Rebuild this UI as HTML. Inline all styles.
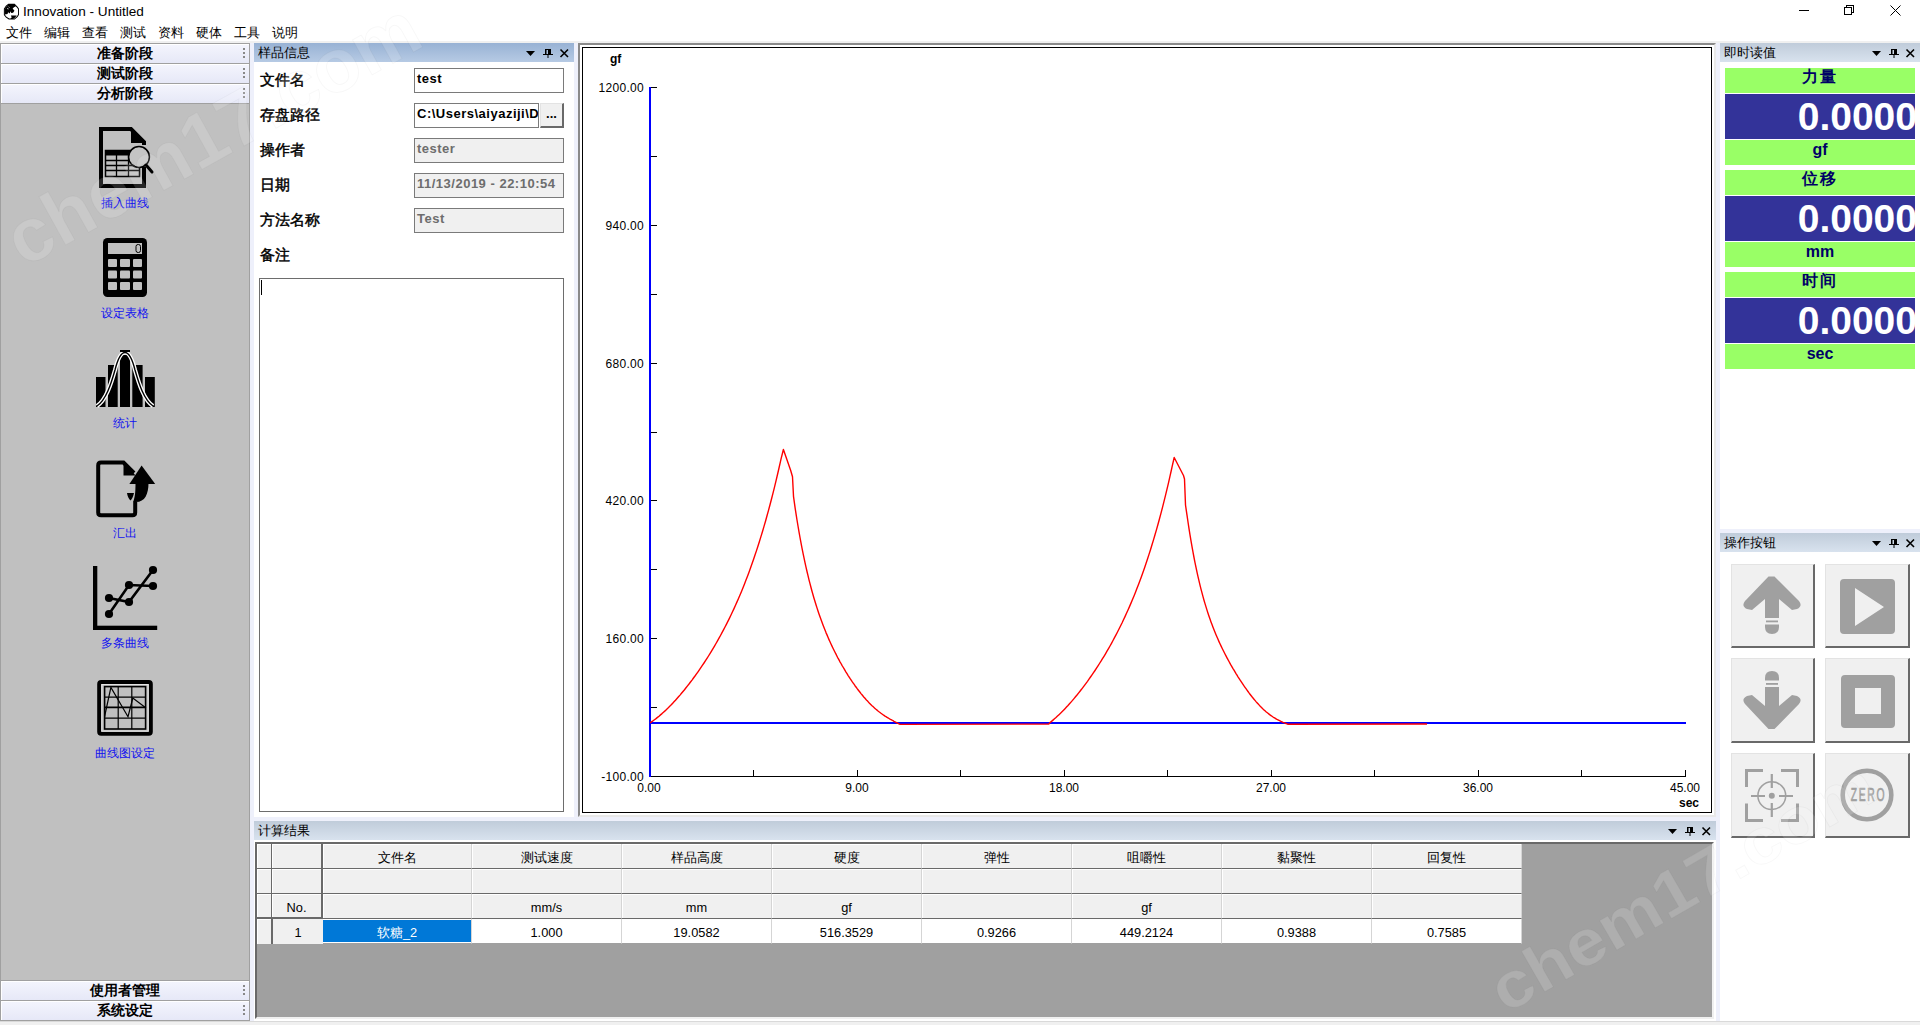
<!DOCTYPE html>
<html><head><meta charset="utf-8">
<style>
*{margin:0;padding:0;box-sizing:border-box}
html,body{width:1920px;height:1025px;overflow:hidden;background:#F0F0F0;font-family:"Liberation Sans",sans-serif;color:#000}
.a{position:absolute}
.t{white-space:nowrap;line-height:1}
.hdr{position:absolute;left:0;width:250px;height:21px;border:1px solid #A0A0A0;background:linear-gradient(#F4F5FD,#E6E8F7);box-shadow:inset 1px 1px 0 #fff}
.hdr span{position:absolute;left:0;width:248px;text-align:center;top:2px;font-size:14px;font-weight:bold;line-height:15px}
.grip{position:absolute;left:242px;top:4px;width:2px;height:10px;background:linear-gradient(#888 0 2px,transparent 2px 4px,#888 4px 6px,transparent 6px 8px,#888 8px 10px)}
.ico{position:absolute;left:0;width:250px;text-align:center;font-size:12px;color:#1010F0;line-height:12px}
.cap{position:absolute;height:19px;font-size:13px;line-height:19px;padding-left:4px;color:#000}
.capA{background:linear-gradient(#98B2D4,#B6CAE4)}
.capI{background:linear-gradient(#C0CCDA,#D8E2EE)}
.lbl{position:absolute;left:260px;font-size:15px;font-weight:normal;-webkit-text-stroke:0.45px #000;letter-spacing:0px;line-height:15px;font-family:"Liberation Serif",serif}
.fld{position:absolute;left:414px;width:150px;height:25px;border:1px solid #7A7A7A;background:#fff;font-size:13px;font-weight:bold;line-height:19px;padding-left:2px;letter-spacing:0.5px;overflow:hidden;white-space:nowrap}
.dis{background:#F0F0F0;color:#6D6D6D}
.ylab{position:absolute;width:50px;text-align:right;font-size:12px;line-height:12px;letter-spacing:0.3px}
.xlab{position:absolute;width:60px;text-align:center;font-size:12px;line-height:12px}
.gbar{position:absolute;left:1725px;width:190px;height:25px;background:#99FF66;color:#000066;text-align:center}
.bbar{position:absolute;left:1725px;width:190px;height:45px;background:#333399;color:#fff;text-align:right;font-weight:bold;font-size:39px;line-height:46px;overflow:hidden;padding-right:0}
.bbar b{position:relative;left:2px}
.btn{position:absolute;background:#F0F0F0;border-top:1px solid #E3E3E3;border-left:1px solid #E3E3E3;border-right:2px solid #696969;border-bottom:2px solid #696969}
.gc{position:absolute;background:#F0F0F0;border-right:1px solid #A0A0A0;border-bottom:1px solid #A0A0A0;font-size:12.8px;text-align:center;line-height:24px;padding-top:2px}
</style></head><body>
<!-- title bar -->
<div class="a" style="left:0;top:0;width:1920px;height:41px;background:#fff"></div>
<div class="a" style="left:0;top:41px;width:1920px;height:2px;background:#F0F0F0"></div>
<svg class="a" style="left:2.5px;top:3px" width="16.5" height="16.5" viewBox="0 0 18 18"><path d="M6 1.5 H12.5 L15.5 4.5 L17 6.5 V12.5 L15.5 15 L12.5 17.5 H6.5 L3.5 15.5 L1.5 13 V6.5 L3.5 3.5Z" fill="#fff" stroke="#000" stroke-width="1.1"/><path d="M6 1.5 H12.5 L14 3.5 L12 4.5 L10.5 6 L12.5 8.5 L11 10.5 L9 11 L8 9 L7.5 11.5 L5.5 10 L5 12 L2 12.5 V6.5 L4 3.5Z" fill="#000"/><path d="M8.5 13.5 H15 L13 16 L11 17.5 H8 L9.5 15.5Z" fill="#000"/><path d="M4.5 6 L6 6.5 M6 4 L7 5" stroke="#fff" stroke-width="0.9"/></svg>
<div class="a t" style="left:23px;top:5px;font-size:13.6px;color:#000">Innovation - Untitled</div>
<div class="a" style="left:1799px;top:10px;width:10px;height:1px;background:#000"></div>
<div class="a" style="left:1846px;top:5px;width:8px;height:8px;border:1px solid #000"></div>
<div class="a" style="left:1844px;top:7px;width:8px;height:8px;border:1px solid #000;background:#fff"></div>
<svg class="a" style="left:1890px;top:5px" width="11" height="11"><path d="M0.5 0.5 L10.5 10.5 M10.5 0.5 L0.5 10.5" stroke="#000" stroke-width="1"/></svg>
<!-- menu -->
<div class="a t" style="left:6px;top:26px;font-size:13px">文件</div>
<div class="a t" style="left:44px;top:26px;font-size:13px">编辑</div>
<div class="a t" style="left:82px;top:26px;font-size:13px">查看</div>
<div class="a t" style="left:120px;top:26px;font-size:13px">测试</div>
<div class="a t" style="left:158px;top:26px;font-size:13px">资料</div>
<div class="a t" style="left:196px;top:26px;font-size:13px">硬体</div>
<div class="a t" style="left:234px;top:26px;font-size:13px">工具</div>
<div class="a t" style="left:272px;top:26px;font-size:13px">说明</div>

<!-- LEFT PANEL -->
<div class="a" style="left:0;top:43px;width:250px;height:978px;background:#C0C0C0;border-left:1px solid #A0A0A0;border-right:1px solid #A0A0A0"></div>
<div class="hdr" style="top:43px"><span>准备阶段</span><i class="grip"></i></div>
<div class="hdr" style="top:63px"><span>测试阶段</span><i class="grip"></i></div>
<div class="hdr" style="top:83px"><span>分析阶段</span><i class="grip"></i></div>
<div class="hdr" style="top:980px"><span>使用者管理</span><i class="grip"></i></div>
<div class="hdr" style="top:1000px"><span>系统设定</span><i class="grip"></i></div>
<svg class="a" style="left:0;top:0" width="250" height="800">
<!-- icon1 doc+table+magnifier -->
<path d="M144 167 V186 H101 V129 H131 L144 142 V145" fill="none" stroke="#000" stroke-width="4" stroke-linejoin="miter"/>
<path d="M131 127 V143 H146 Z" fill="#000"/>
<rect x="105.5" y="150.5" width="34" height="26" fill="none" stroke="#000" stroke-width="1.5"/>
<rect x="105" y="150" width="35" height="5.5" fill="#000"/>
<path d="M105 160.5H140M105 165.5H140M105 170.5H140M116.5 155V177M128.5 155V177" stroke="#000" stroke-width="1.3"/>
<circle cx="139" cy="157" r="10.4" fill="#C4C4C4" stroke="#000" stroke-width="1.5"/>
<path d="M146 165 L152 172" stroke="#000" stroke-width="3" stroke-linecap="round"/>
<!-- icon2 calculator -->
<rect x="103" y="238" width="44" height="59" rx="4.5" fill="#000"/>
<rect x="108" y="243" width="34" height="11" fill="#C0C0C0"/>
<rect x="136" y="244.5" width="4.5" height="8" rx="2" fill="none" stroke="#000" stroke-width="1"/>
<g fill="#C0C0C0">
<rect x="108" y="259" width="9" height="8" rx="1"/><rect x="120" y="259" width="10" height="8" rx="1"/><rect x="133" y="259" width="9" height="8" rx="1"/>
<rect x="108" y="270.5" width="9" height="8" rx="1"/><rect x="120" y="270.5" width="10" height="8" rx="1"/><rect x="133" y="270.5" width="9" height="8" rx="1"/>
<rect x="108" y="282" width="9" height="8" rx="1"/><rect x="120" y="282" width="10" height="8" rx="1"/><rect x="133" y="282" width="9" height="8" rx="1"/>
</g>
<!-- icon3 statistics -->
<g fill="#000">
<rect x="96" y="377" width="9.5" height="30"/>
<rect x="108" y="365" width="9.7" height="42"/>
<rect x="120" y="355" width="10" height="52"/>
<rect x="132.3" y="365" width="10.3" height="42"/>
<rect x="145" y="377" width="9.8" height="30"/>
</g>
<path d="M97 406 C106 400 111 384 115 370 C118 358 121 352.5 125 352.5 C129 352.5 132 358 135 370 C139 384 144 400 153 406" fill="none" stroke="#fff" stroke-width="4.2"/>
<path d="M97 406 C106 400 111 384 115 370 C118 358 121 352.5 125 352.5 C129 352.5 132 358 135 370 C139 384 144 400 153 406" fill="none" stroke="#000" stroke-width="1.4"/>
<rect x="120" y="350" width="10" height="2" fill="#000"/>
<!-- icon4 export -->
<path d="M135.2 502 V512.5 Q135.2 515.2 132.5 515.2 H101 Q98.2 515.2 98.2 512.5 V465.5 Q98.2 462.6 101 462.6 H123.5 L134 473" fill="none" stroke="#000" stroke-width="4"/>
<path d="M123.5 461 V475.5 H135.5 Z" fill="#000"/>
<path d="M141.6 465.5 L155.2 484 H129.4 Z" fill="#000"/>
<path d="M135.5 483 H148.5 C148.5 494 145 502 136 502 H133 C135 498 135.5 492 135.5 483 Z" fill="#000"/>
<path d="M127 493 H134 C133 497 132 499 130.5 500.5 C128.5 498.5 127.5 496 127 493 Z" fill="#000"/>
<!-- icon5 multi curves -->
<rect x="93" y="566" width="4.3" height="64" fill="#000"/>
<rect x="93" y="625.7" width="64.2" height="4.3" fill="#000"/>
<polyline points="109,614 129,585 153,586" fill="none" stroke="#000" stroke-width="2.6"/>
<polyline points="109,598 129,602 153,570" fill="none" stroke="#000" stroke-width="2.6"/>
<g fill="#000"><circle cx="109" cy="614" r="4.1"/><circle cx="129" cy="585" r="4.1"/><circle cx="153" cy="586" r="4.1"/><circle cx="109" cy="598" r="4.1"/><circle cx="129" cy="602" r="4.1"/><circle cx="153" cy="570" r="4.1"/></g>
<!-- icon6 chart settings -->
<rect x="99.2" y="682.1" width="51.6" height="51.6" rx="2" fill="none" stroke="#000" stroke-width="4"/>
<rect x="101.8" y="684.6" width="46.4" height="46.6" fill="none" stroke="#E8E8E8" stroke-width="1"/>
<rect x="104.6" y="686.6" width="41" height="42.4" fill="none" stroke="#000" stroke-width="1.6"/>
<path d="M118.2 686V729M131.8 686V729M104 697.2H146M104 718.2H146" stroke="#000" stroke-width="1.2"/>
<path d="M104 707.4H146" stroke="#000" stroke-width="1.8"/>
<polyline points="104.5,717 110.9,687.4 128,716.7 132.8,698 146,708" fill="none" stroke="#000" stroke-width="1.2"/>
</svg>
<div class="ico t" style="top:197px">插入曲线</div>
<div class="ico t" style="top:307px">设定表格</div>
<div class="ico t" style="top:417px">统计</div>
<div class="ico t" style="top:527px">汇出</div>
<div class="ico t" style="top:637px">多条曲线</div>
<div class="ico t" style="top:747px">曲线图设定</div>

<!-- splitter strips -->
<div class="a" style="left:250px;top:43px;width:4px;height:978px;background:#EEF0FB"></div>

<!-- SAMPLE INFO PANEL -->
<div class="a" style="left:254px;top:43px;width:320px;height:774px;background:#fff"></div>
<div class="a" style="left:574px;top:43px;width:4px;height:778px;background:#EEF0FB"></div>
<div class="a" style="left:254px;top:817px;width:1466px;height:4px;background:#EEF0FB"></div>
<div class="cap capA" style="left:254px;top:43px;width:320px">样品信息</div>
<svg class="a" style="left:524px;top:47px" width="48" height="12" viewBox="0 0 48 12">
<path d="M2 4 H11 L6.5 9Z" fill="#000"/>
<path d="M21 2 H27 V7 H29 V8 H24.5 V11 H23.5 V8 H19 V7 H21Z M22.5 3 V7 H24 V3Z" fill="#000"/>
<path d="M36.5 2.5 L44 10 M44 2.5 L36.5 10" stroke="#000" stroke-width="1.6"/>
</svg>
<div class="lbl t" style="top:73px">文件名</div>
<div class="lbl t" style="top:108px">存盘路径</div>
<div class="lbl t" style="top:143px">操作者</div>
<div class="lbl t" style="top:178px">日期</div>
<div class="lbl t" style="top:213px">方法名称</div>
<div class="lbl t" style="top:248px">备注</div>
<div class="fld" style="top:68px">test</div>
<div class="fld" style="top:103px;width:125px">C:\Users\aiyaziji\Desktop</div>
<div class="a" style="left:540px;top:103px;width:24px;height:25px;background:#F0F0F0;border-top:1px solid #E3E3E3;border-left:1px solid #E3E3E3;border-right:2px solid #696969;border-bottom:2px solid #696969;font-size:13px;font-weight:bold;text-align:center;line-height:20px">...</div>
<div class="fld dis" style="top:138px">tester</div>
<div class="fld dis" style="top:173px">11/13/2019 - 22:10:54</div>
<div class="fld dis" style="top:208px">Test</div>
<div class="a" style="left:259px;top:278px;width:305px;height:534px;border:1px solid #6D6D6D;background:#fff"></div>
<div class="a" style="left:261px;top:280px;width:1px;height:15px;background:#000"></div>

<!-- CHART -->
<div class="a" style="left:578px;top:43px;width:1138px;height:774px;background:#fff;border-top:2px solid #8A8A8A;border-left:2px solid #8A8A8A;border-right:2px solid #E8E8E8;border-bottom:2px solid #E8E8E8"></div>
<div class="a" style="left:582px;top:47px;width:1130px;height:766px;border:1px solid #000"></div>
<svg class="a" style="left:0;top:0" width="1920" height="1025">
<g shape-rendering="crispEdges" stroke="#000" stroke-width="1">
<path d="M651 87.5H657M651 156.5H657M651 225.5H657M651 294.5H657M651 363.5H657M651 432.5H657M651 500.5H657M651 569.5H657M651 638.5H657M651 707.5H657"/>
<path d="M651 776.5H1685.5"/>
<path d="M753.5 770V776M857.5 770V776M960.5 770V776M1064.5 770V776M1167.5 770V776M1271.5 770V776M1374.5 770V776M1478.5 770V776M1581.5 770V776M1685.5 770V776"/>
</g>
<g shape-rendering="crispEdges" fill="#0000FF">
<rect x="649" y="87" width="2" height="690"/>
<rect x="649" y="722" width="1037" height="2"/>
</g>
<polyline fill="none" stroke="#FF0000" stroke-width="1.4" stroke-linejoin="round" points="650.0,722.8 651.5,721.8 653.0,720.8 654.5,719.7 656.0,718.6 657.5,717.4 659.0,716.2 660.5,714.9 662.0,713.6 663.5,712.2 665.0,710.9 666.5,709.4 668.0,708.0 669.5,706.5 671.0,705.0 672.5,703.4 674.0,701.8 675.5,700.2 677.0,698.5 678.5,696.8 680.0,695.1 681.5,693.3 683.0,691.5 684.5,689.7 686.0,687.8 687.5,685.9 689.0,684.0 690.5,682.0 692.0,680.1 693.5,678.0 695.0,676.0 696.5,673.9 698.0,671.8 699.5,669.6 701.0,667.4 702.5,665.2 704.0,663.0 705.5,660.7 707.0,658.4 708.5,656.0 710.0,653.6 711.5,651.1 713.0,648.6 714.5,646.1 716.0,643.5 717.5,640.9 719.0,638.2 720.5,635.5 722.0,632.7 723.5,629.9 725.0,627.0 726.5,624.1 728.0,621.1 729.5,618.1 731.0,615.0 732.5,611.8 734.0,608.6 735.5,605.3 737.0,601.9 738.5,598.5 740.0,595.0 741.5,591.4 743.0,587.7 744.5,583.9 746.0,580.1 747.5,576.2 749.0,572.2 750.5,568.0 752.0,563.8 753.5,559.5 755.0,555.1 756.5,550.6 758.0,546.0 759.5,541.3 761.0,536.4 762.5,531.5 764.0,526.4 765.5,521.2 767.0,515.8 768.5,510.4 770.0,504.8 771.5,499.0 773.0,493.1 774.5,487.1 776.0,480.9 777.5,474.5 779.0,468.0 780.5,461.4 781.0,459.1 783.4,449.5 790.7,470.5 792.5,476.8 793.5,496.3 795.0,507.2 796.0,513.7 797.0,520.0 798.0,526.0 799.0,531.8 800.0,537.5 801.0,542.9 802.0,548.1 803.0,553.1 804.0,557.9 805.0,562.6 806.0,567.1 807.0,571.5 808.0,575.7 809.0,579.8 810.0,583.7 811.0,587.5 812.0,591.2 813.0,594.8 814.0,598.2 815.0,601.5 816.0,604.8 817.0,607.9 818.0,611.0 819.0,613.9 820.0,616.8 821.0,619.6 822.0,622.3 823.0,625.0 824.0,627.6 825.0,630.1 826.0,632.6 827.0,634.9 828.0,637.3 829.0,639.6 830.0,641.8 831.0,644.0 832.0,646.1 833.0,648.2 834.0,650.3 835.0,652.3 836.0,654.2 837.0,656.2 838.0,658.1 839.0,659.9 840.0,661.8 841.0,663.5 842.0,665.3 843.0,667.0 844.0,668.7 845.0,670.4 846.0,672.1 847.0,673.7 848.0,675.3 849.0,676.8 850.0,678.4 851.0,679.9 852.0,681.4 853.0,682.8 854.0,684.2 855.0,685.7 856.0,687.0 857.0,688.4 858.0,689.7 859.0,691.0 860.0,692.3 861.0,693.6 862.0,694.8 863.0,696.0 864.0,697.2 865.0,698.3 866.0,699.5 867.0,700.6 868.0,701.6 869.0,702.7 870.0,703.7 871.0,704.7 872.0,705.7 873.0,706.6 874.0,707.5 875.0,708.4 876.0,709.3 877.0,710.1 878.0,711.0 879.0,711.8 880.0,712.5 881.0,713.3 882.0,714.0 883.0,714.7 884.0,715.4 885.0,716.1 886.0,716.7 887.0,717.3 888.0,717.9 889.0,718.5 890.0,719.1 891.0,719.6 892.0,720.2 893.0,720.7 894.0,721.3 895.0,721.8 896.0,722.3 897.0,722.8 898.0,723.3 899.0,723.9 900.0,724.4 1048.8,724.0 1050.0,722.6 1051.5,721.4 1053.0,720.1 1054.5,718.8 1056.0,717.5 1057.5,716.1 1059.0,714.7 1060.5,713.3 1062.0,711.8 1063.5,710.3 1065.0,708.7 1066.5,707.1 1068.0,705.5 1069.5,703.8 1071.0,702.1 1072.5,700.4 1074.0,698.6 1075.5,696.8 1077.0,695.0 1078.5,693.1 1080.0,691.2 1081.5,689.3 1083.0,687.3 1084.5,685.3 1086.0,683.3 1087.5,681.3 1089.0,679.2 1090.5,677.0 1092.0,674.9 1093.5,672.7 1095.0,670.5 1096.5,668.2 1098.0,665.9 1099.5,663.5 1101.0,661.2 1102.5,658.7 1104.0,656.3 1105.5,653.8 1107.0,651.2 1108.5,648.6 1110.0,646.0 1111.5,643.3 1113.0,640.5 1114.5,637.7 1116.0,634.9 1117.5,632.0 1119.0,629.0 1120.5,626.0 1122.0,623.0 1123.5,619.8 1125.0,616.6 1126.5,613.3 1128.0,610.0 1129.5,606.6 1131.0,603.1 1132.5,599.5 1134.0,595.9 1135.5,592.2 1137.0,588.3 1138.5,584.4 1140.0,580.4 1141.5,576.4 1143.0,572.2 1144.5,567.9 1146.0,563.5 1147.5,559.0 1149.0,554.4 1150.5,549.7 1152.0,544.8 1153.5,539.9 1155.0,534.8 1156.5,529.6 1158.0,524.2 1159.5,518.8 1161.0,513.1 1162.5,507.4 1164.0,501.4 1165.5,495.4 1167.0,489.2 1168.5,482.8 1170.0,476.2 1171.5,469.5 1172.0,467.2 1174.2,457.5 1183.5,475.5 1184.5,479.0 1185.5,505.0 1187.0,515.2 1188.0,522.0 1189.0,528.6 1190.0,534.8 1191.0,540.9 1192.0,546.6 1193.0,552.2 1194.0,557.5 1195.0,562.6 1196.0,567.4 1197.0,572.1 1198.0,576.6 1199.0,580.9 1200.0,585.1 1201.0,589.1 1202.0,592.9 1203.0,596.6 1204.0,600.2 1205.0,603.6 1206.0,606.9 1207.0,610.1 1208.0,613.2 1209.0,616.2 1210.0,619.1 1211.0,621.9 1212.0,624.6 1213.0,627.2 1214.0,629.8 1215.0,632.3 1216.0,634.7 1217.0,637.0 1218.0,639.3 1219.0,641.6 1220.0,643.8 1221.0,645.9 1222.0,648.0 1223.0,650.0 1224.0,652.0 1225.0,654.0 1226.0,655.9 1227.0,657.8 1228.0,659.7 1229.0,661.5 1230.0,663.3 1231.0,665.1 1232.0,666.8 1233.0,668.6 1234.0,670.2 1235.0,671.9 1236.0,673.6 1237.0,675.2 1238.0,676.8 1239.0,678.3 1240.0,679.9 1241.0,681.4 1242.0,682.9 1243.0,684.4 1244.0,685.9 1245.0,687.3 1246.0,688.7 1247.0,690.1 1248.0,691.5 1249.0,692.9 1250.0,694.2 1251.0,695.5 1252.0,696.8 1253.0,698.0 1254.0,699.2 1255.0,700.4 1256.0,701.6 1257.0,702.7 1258.0,703.8 1259.0,704.9 1260.0,706.0 1261.0,707.0 1262.0,708.0 1263.0,709.0 1264.0,709.9 1265.0,710.8 1266.0,711.7 1267.0,712.5 1268.0,713.3 1269.0,714.1 1270.0,714.9 1271.0,715.6 1272.0,716.3 1273.0,717.0 1274.0,717.6 1275.0,718.2 1276.0,718.8 1277.0,719.4 1278.0,719.9 1279.0,720.4 1280.0,720.9 1281.0,721.4 1282.0,721.8 1283.0,722.3 1284.0,722.7 1285.0,723.1 1286.0,723.5 1287.0,723.9 1288.0,724.3 1427.0,724.0"/>
</svg>
<div class="a t" style="left:610px;top:53px;font-size:12px;font-weight:bold">gf</div>
<div class="ylab t" style="left:594px;top:82px">1200.00</div>
<div class="ylab t" style="left:594px;top:220px">940.00</div>
<div class="ylab t" style="left:594px;top:358px">680.00</div>
<div class="ylab t" style="left:594px;top:495px">420.00</div>
<div class="ylab t" style="left:594px;top:633px">160.00</div>
<div class="ylab t" style="left:594px;top:771px">-100.00</div>
<div class="xlab t" style="left:619px;top:782px">0.00</div>
<div class="xlab t" style="left:827px;top:782px">9.00</div>
<div class="xlab t" style="left:1034px;top:782px">18.00</div>
<div class="xlab t" style="left:1241px;top:782px">27.00</div>
<div class="xlab t" style="left:1448px;top:782px">36.00</div>
<div class="xlab t" style="left:1655px;top:782px">45.00</div>
<div class="a t" style="left:1679px;top:797px;font-size:12px;font-weight:bold">sec</div>

<!-- RIGHT PANELS -->
<div class="a" style="left:1716px;top:43px;width:4px;height:978px;background:#EEF0FB"></div>
<div class="a" style="left:1720px;top:43px;width:200px;height:486px;background:#fff"></div>
<div class="a" style="left:1720px;top:529px;width:200px;height:4px;background:#EEF0FB"></div>
<div class="a" style="left:1720px;top:533px;width:200px;height:488px;background:#fff"></div>
<div class="cap capI" style="left:1720px;top:43px;width:200px">即时读值</div>
<div class="cap capI" style="left:1720px;top:533px;width:200px">操作按钮</div>
<svg class="a" style="left:1870px;top:47px" width="48" height="12" viewBox="0 0 48 12">
<path d="M2 4 H11 L6.5 9Z" fill="#000"/>
<path d="M21 2 H27 V7 H29 V8 H24.5 V11 H23.5 V8 H19 V7 H21Z M22.5 3 V7 H24 V3Z" fill="#000"/>
<path d="M36.5 2.5 L44 10 M44 2.5 L36.5 10" stroke="#000" stroke-width="1.6"/>
</svg>
<svg class="a" style="left:1870px;top:537px" width="48" height="12" viewBox="0 0 48 12">
<path d="M2 4 H11 L6.5 9Z" fill="#000"/>
<path d="M21 2 H27 V7 H29 V8 H24.5 V11 H23.5 V8 H19 V7 H21Z M22.5 3 V7 H24 V3Z" fill="#000"/>
<path d="M36.5 2.5 L44 10 M44 2.5 L36.5 10" stroke="#000" stroke-width="1.6"/>
</svg>
<div class="gbar t" style="top:68px;font-size:16px;font-weight:bold;line-height:17px;letter-spacing:2px;font-family:'Liberation Serif',serif">力量</div>
<div class="bbar t" style="top:94px"><b>0.0000</b></div>
<div class="gbar t" style="top:140px;font-size:16px;font-weight:bold;line-height:20px">gf</div>
<div class="gbar t" style="top:170px;font-size:16px;font-weight:bold;line-height:17px;letter-spacing:2px;font-family:'Liberation Serif',serif">位移</div>
<div class="bbar t" style="top:196px"><b>0.0000</b></div>
<div class="gbar t" style="top:242px;font-size:16px;font-weight:bold;line-height:20px">mm</div>
<div class="gbar t" style="top:272px;font-size:16px;font-weight:bold;line-height:17px;letter-spacing:2px;font-family:'Liberation Serif',serif">时间</div>
<div class="bbar t" style="top:298px"><b>0.0000</b></div>
<div class="gbar t" style="top:344px;font-size:16px;font-weight:bold;line-height:20px">sec</div>
<!-- buttons -->
<div class="btn" style="left:1731px;top:564px;width:84px;height:84px"></div>
<div class="btn" style="left:1825px;top:564px;width:85px;height:84px"></div>
<div class="btn" style="left:1731px;top:658px;width:84px;height:85px"></div>
<div class="btn" style="left:1825px;top:658px;width:85px;height:85px"></div>
<div class="btn" style="left:1731px;top:753px;width:84px;height:85px"></div>
<div class="btn" style="left:1825px;top:753px;width:85px;height:85px"></div>
<svg class="a" style="left:0;top:0" width="1920" height="1025">
<g fill="#A0A0A0">
<!-- up arrow -->
<path d="M1768.5 576.5 H1774.5 L1799 601 Q1803 606 1797 609 L1792 610 L1779 599 V618 H1765 V599 L1752 610 L1747 609 Q1741 606 1745 601Z"/>
<rect x="1766" y="620.5" width="12" height="1.8"/>
<path d="M1765 624.5 H1779 V627 Q1779 634 1772 634 Q1765 634 1765 627Z"/>
<!-- down arrow -->
<path d="M1768.5 729 H1774.5 L1799 704 Q1803 699 1797 696 L1792 695 L1779 706 V687 H1765 V706 L1752 695 L1747 696 Q1741 699 1745 704Z"/>
<rect x="1766" y="683" width="12" height="1.8"/>
<path d="M1765 680.5 H1779 V678 Q1779 671 1772 671 Q1765 671 1765 678Z"/>
<!-- play -->
<path fill-rule="evenodd" d="M1844 579 H1891 Q1895 579 1895 583 V630 Q1895 634 1891 634 H1844 Q1840 634 1840 630 V583 Q1840 579 1844 579Z M1855 588 V626 L1884 607Z"/>
<!-- stop -->
<path fill-rule="evenodd" d="M1845 675 H1891 Q1895 675 1895 679 V724 Q1895 728 1891 728 H1845 Q1841 728 1841 724 V679 Q1841 675 1845 675Z M1855 688 V714 H1881 V688Z"/>
</g>
<!-- target -->
<g stroke="#A0A0A0" fill="none" stroke-width="3">
<path d="M1746.5 787 V770.5 H1763 M1781 770.5 H1797.5 V787 M1797.5 803.5 V820.5 H1781 M1763 820.5 H1746.5 V803.5"/>
</g>
<g stroke="#A0A0A0" fill="none" stroke-width="1.5">
<circle cx="1771.8" cy="795.7" r="13.9"/>
</g>
<path d="M1771.8 774 V788 M1771.8 803 V817 M1751 796 H1765 M1779 796 H1793" stroke="#A0A0A0" stroke-width="2.2"/>
<circle cx="1771.8" cy="795.7" r="3" fill="#A0A0A0"/>
<!-- zero -->
<circle cx="1867" cy="795" r="24.3" stroke="#A0A0A0" stroke-width="4.6" fill="none"/>
<text x="1867" y="801.3" text-anchor="middle" font-family="Liberation Sans" font-size="17.8" fill="#A0A0A0" stroke="#A0A0A0" stroke-width="0.6" letter-spacing="3" transform="translate(1868.5 801.3) scale(0.58 1) translate(-1867 -801.3)">ZERO</text>
</svg>

<!-- TABLE PANEL -->
<div class="a" style="left:254px;top:821px;width:1462px;height:200px;background:#fff"></div>
<div class="cap capI" style="left:254px;top:821px;width:1462px">计算结果</div>
<svg class="a" style="left:1666px;top:825px" width="48" height="12" viewBox="0 0 48 12">
<path d="M2 4 H11 L6.5 9Z" fill="#000"/>
<path d="M21 2 H27 V7 H29 V8 H24.5 V11 H23.5 V8 H19 V7 H21Z M22.5 3 V7 H24 V3Z" fill="#000"/>
<path d="M36.5 2.5 L44 10 M44 2.5 L36.5 10" stroke="#000" stroke-width="1.6"/>
</svg>
<div class="a" style="left:255px;top:842px;width:1459px;height:177px;background:#A0A0A0;border-top:2px solid #696969;border-left:2px solid #696969;border-right:2px solid #F0F0F0;border-bottom:2px solid #F0F0F0"></div>
<div class="gc" style="left:257px;top:844px;width:15px;height:25px;background:#F0F0F0;border-right:1px solid #696969;border-bottom:1px solid #696969;box-shadow:inset 1px 1px 0 #fff"></div>
<div class="gc" style="left:257px;top:869px;width:15px;height:25px;background:#F0F0F0;border-right:1px solid #696969;border-bottom:1px solid #696969;box-shadow:inset 1px 1px 0 #fff"></div>
<div class="gc" style="left:257px;top:894px;width:15px;height:25px;background:#F0F0F0;border-right:1px solid #696969;border-bottom:2px solid #696969;box-shadow:inset 1px 1px 0 #fff"></div>
<div class="gc" style="left:257px;top:919px;width:15px;height:25px;background:#F0F0F0;border-right:1px solid #696969;border-bottom:0;box-shadow:inset 1px 1px 0 #fff"></div>
<div class="gc" style="left:272px;top:844px;width:51px;height:25px;background:#F0F0F0;border-right:2px solid #696969;border-bottom:1px solid #696969;box-shadow:inset 1px 1px 0 #fff"></div>
<div class="gc" style="left:272px;top:869px;width:51px;height:25px;background:#F0F0F0;border-right:2px solid #696969;border-bottom:1px solid #696969;box-shadow:inset 1px 1px 0 #fff"></div>
<div class="gc" style="left:272px;top:894px;width:51px;height:25px;background:#F0F0F0;border-right:2px solid #696969;border-bottom:2px solid #696969;box-shadow:inset 1px 1px 0 #fff">No.</div>
<div class="gc" style="left:272px;top:919px;width:51px;height:25px;background:#F0F0F0;border-right:0;border-left:1px solid #696969;border-bottom:0;box-shadow:none">1</div>
<div class="gc" style="left:323px;top:844px;width:149px;height:25px;background:#F0F0F0;border-right:1px solid #D5D5D5;border-bottom:1px solid #696969;box-shadow:inset 1px 1px 0 #fff">文件名</div>
<div class="gc" style="left:323px;top:869px;width:149px;height:25px;background:#F0F0F0;border-right:1px solid #D5D5D5;border-bottom:1px solid #696969;box-shadow:inset 1px 1px 0 #fff"></div>
<div class="gc" style="left:323px;top:894px;width:149px;height:25px;background:#F0F0F0;border-right:1px solid #D5D5D5;border-bottom:1px solid #696969;box-shadow:inset 1px 1px 0 #fff"></div>
<div class="gc" style="left:323px;top:919px;width:149px;height:25px;background:#fff;border-right:1px solid #D5D5D5">软糖_2</div>
<div class="gc" style="left:472px;top:844px;width:150px;height:25px;background:#F0F0F0;border-right:1px solid #D5D5D5;border-bottom:1px solid #696969;box-shadow:inset 1px 1px 0 #fff">测试速度</div>
<div class="gc" style="left:472px;top:869px;width:150px;height:25px;background:#F0F0F0;border-right:1px solid #D5D5D5;border-bottom:1px solid #696969;box-shadow:inset 1px 1px 0 #fff"></div>
<div class="gc" style="left:472px;top:894px;width:150px;height:25px;background:#F0F0F0;border-right:1px solid #D5D5D5;border-bottom:1px solid #696969;box-shadow:inset 1px 1px 0 #fff">mm/s</div>
<div class="gc" style="left:472px;top:919px;width:150px;height:25px;background:#fff;border-right:1px solid #D5D5D5">1.000</div>
<div class="gc" style="left:622px;top:844px;width:150px;height:25px;background:#F0F0F0;border-right:1px solid #D5D5D5;border-bottom:1px solid #696969;box-shadow:inset 1px 1px 0 #fff">样品高度</div>
<div class="gc" style="left:622px;top:869px;width:150px;height:25px;background:#F0F0F0;border-right:1px solid #D5D5D5;border-bottom:1px solid #696969;box-shadow:inset 1px 1px 0 #fff"></div>
<div class="gc" style="left:622px;top:894px;width:150px;height:25px;background:#F0F0F0;border-right:1px solid #D5D5D5;border-bottom:1px solid #696969;box-shadow:inset 1px 1px 0 #fff">mm</div>
<div class="gc" style="left:622px;top:919px;width:150px;height:25px;background:#fff;border-right:1px solid #D5D5D5">19.0582</div>
<div class="gc" style="left:772px;top:844px;width:150px;height:25px;background:#F0F0F0;border-right:1px solid #D5D5D5;border-bottom:1px solid #696969;box-shadow:inset 1px 1px 0 #fff">硬度</div>
<div class="gc" style="left:772px;top:869px;width:150px;height:25px;background:#F0F0F0;border-right:1px solid #D5D5D5;border-bottom:1px solid #696969;box-shadow:inset 1px 1px 0 #fff"></div>
<div class="gc" style="left:772px;top:894px;width:150px;height:25px;background:#F0F0F0;border-right:1px solid #D5D5D5;border-bottom:1px solid #696969;box-shadow:inset 1px 1px 0 #fff">gf</div>
<div class="gc" style="left:772px;top:919px;width:150px;height:25px;background:#fff;border-right:1px solid #D5D5D5">516.3529</div>
<div class="gc" style="left:922px;top:844px;width:150px;height:25px;background:#F0F0F0;border-right:1px solid #D5D5D5;border-bottom:1px solid #696969;box-shadow:inset 1px 1px 0 #fff">弹性</div>
<div class="gc" style="left:922px;top:869px;width:150px;height:25px;background:#F0F0F0;border-right:1px solid #D5D5D5;border-bottom:1px solid #696969;box-shadow:inset 1px 1px 0 #fff"></div>
<div class="gc" style="left:922px;top:894px;width:150px;height:25px;background:#F0F0F0;border-right:1px solid #D5D5D5;border-bottom:1px solid #696969;box-shadow:inset 1px 1px 0 #fff"></div>
<div class="gc" style="left:922px;top:919px;width:150px;height:25px;background:#fff;border-right:1px solid #D5D5D5">0.9266</div>
<div class="gc" style="left:1072px;top:844px;width:150px;height:25px;background:#F0F0F0;border-right:1px solid #D5D5D5;border-bottom:1px solid #696969;box-shadow:inset 1px 1px 0 #fff">咀嚼性</div>
<div class="gc" style="left:1072px;top:869px;width:150px;height:25px;background:#F0F0F0;border-right:1px solid #D5D5D5;border-bottom:1px solid #696969;box-shadow:inset 1px 1px 0 #fff"></div>
<div class="gc" style="left:1072px;top:894px;width:150px;height:25px;background:#F0F0F0;border-right:1px solid #D5D5D5;border-bottom:1px solid #696969;box-shadow:inset 1px 1px 0 #fff">gf</div>
<div class="gc" style="left:1072px;top:919px;width:150px;height:25px;background:#fff;border-right:1px solid #D5D5D5">449.2124</div>
<div class="gc" style="left:1222px;top:844px;width:150px;height:25px;background:#F0F0F0;border-right:1px solid #D5D5D5;border-bottom:1px solid #696969;box-shadow:inset 1px 1px 0 #fff">黏聚性</div>
<div class="gc" style="left:1222px;top:869px;width:150px;height:25px;background:#F0F0F0;border-right:1px solid #D5D5D5;border-bottom:1px solid #696969;box-shadow:inset 1px 1px 0 #fff"></div>
<div class="gc" style="left:1222px;top:894px;width:150px;height:25px;background:#F0F0F0;border-right:1px solid #D5D5D5;border-bottom:1px solid #696969;box-shadow:inset 1px 1px 0 #fff"></div>
<div class="gc" style="left:1222px;top:919px;width:150px;height:25px;background:#fff;border-right:1px solid #D5D5D5">0.9388</div>
<div class="gc" style="left:1372px;top:844px;width:150px;height:25px;background:#F0F0F0;border-right:1px solid #D5D5D5;border-bottom:1px solid #696969;box-shadow:inset 1px 1px 0 #fff">回复性</div>
<div class="gc" style="left:1372px;top:869px;width:150px;height:25px;background:#F0F0F0;border-right:1px solid #D5D5D5;border-bottom:1px solid #696969;box-shadow:inset 1px 1px 0 #fff"></div>
<div class="gc" style="left:1372px;top:894px;width:150px;height:25px;background:#F0F0F0;border-right:1px solid #D5D5D5;border-bottom:1px solid #696969;box-shadow:inset 1px 1px 0 #fff"></div>
<div class="gc" style="left:1372px;top:919px;width:150px;height:25px;background:#fff;border-right:1px solid #D5D5D5">0.7585</div>
<div class="gc" style="left:323px;top:920px;width:148px;height:22px;background:#0078D7;color:#fff;line-height:22px;border:none">软糖_2</div>


<div class="a" style="left:0;top:1021px;width:1920px;height:1px;background:#D9D9D9"></div>
<!-- watermark -->
<svg class="a" style="left:0;top:0" width="1920" height="1025">
<g font-family="Liberation Sans" font-weight="bold" font-size="70" fill="rgba(255,255,255,0.15)" stroke="rgba(0,0,0,0.03)" stroke-width="1">
<text x="0" y="0" font-size="76" transform="translate(24 268) rotate(-29) scale(1.0 1)">chem17.com</text>
<text x="0" y="0" transform="translate(1506 1014) rotate(-30) scale(1.02 0.92)">chem17.com</text>
</g>
</svg>
</body></html>
